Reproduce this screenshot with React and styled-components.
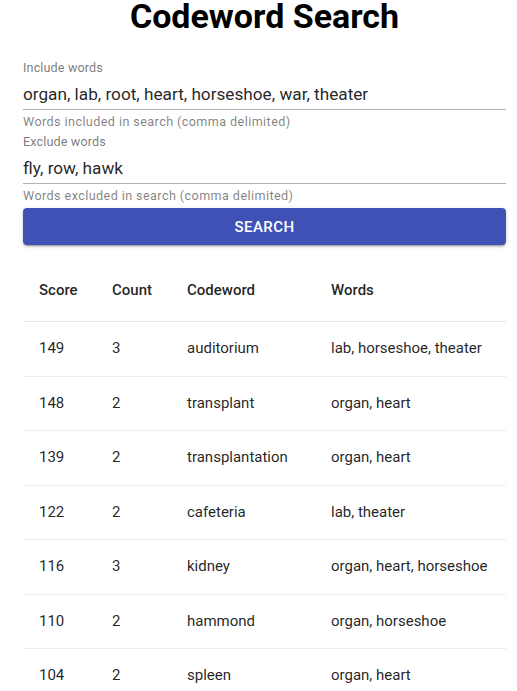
import React from 'react';
import styled, { createGlobalStyle } from 'styled-components';

const GlobalStyle = createGlobalStyle`
body {
  margin: 0;
  background: #fff;
  font-family: Roboto, "Helvetica", Arial, sans-serif;
}
`;

const Page = styled.div`
padding: 0 11px 0 23px;
`;

const Title = styled.h1`
margin: -2px 0 26px;
font-size: 34px;
line-height: 36px;
font-weight: 700;
color: #000;
text-align: center;
`;

const Field = styled.div`
display: flex;
flex-direction: column;
margin-bottom: 4px;
`;

const Label = styled.label`
font-size: 12.6px;
line-height: 16px;
color: rgba(0, 0, 0, 0.54);
letter-spacing: 0.01em;
`;

const Input = styled.input`
border: none;
border-bottom: 1px solid rgba(0, 0, 0, 0.3);
padding: 8px 0 5px;
margin: 0;
font-family: inherit;
font-size: 17.2px;
line-height: 20px;
height: 20px;
box-sizing: content-box;
color: rgba(0, 0, 0, 0.87);
background: transparent;
&:focus { outline: none; }
`;

const Helper = styled.p`
margin: 4px 0 0;
font-size: 12.6px;
line-height: 16px;
color: rgba(0, 0, 0, 0.5);
letter-spacing: 0.033em;
`;

const SearchButton = styled.button`
display: block;
width: 100%;
height: 37px;
border: none;
border-radius: 4px;
background: #3f51b5;
color: #fff;
font-family: inherit;
font-size: 15px;
font-weight: 500;
letter-spacing: 0.028em;
text-transform: uppercase;
box-shadow: 0 3px 1px -2px rgba(0,0,0,0.2), 0 2px 2px 0 rgba(0,0,0,0.14), 0 1px 5px 0 rgba(0,0,0,0.12);
cursor: pointer;
`;

const Table = styled.table`
width: 100%;
margin-top: 18.5px;
border-collapse: collapse;
table-layout: fixed;
font-size: 15px;
color: rgba(0, 0, 0, 0.87);
`;

const Th = styled.th`
box-sizing: border-box;
width: ${(p) => p.w}px;
text-align: left;
font-weight: 500;
padding: 16px 16px 20px;
line-height: 21.5px;
border-bottom: 1px solid #e6e6e6;
`;

const Td = styled.td`
padding: 16px;
line-height: 21.5px;
border-bottom: 1px solid #ececec;
white-space: nowrap;
`;

const columns = [
  { key: 'score', label: 'Score', w: 73 },
  { key: 'count', label: 'Count', w: 75 },
  { key: 'codeword', label: 'Codeword', w: 144 },
  { key: 'words', label: 'Words', w: 191 },
];

const results = [
  { score: 149, count: 3, codeword: 'auditorium', words: 'lab, horseshoe, theater' },
  { score: 148, count: 2, codeword: 'transplant', words: 'organ, heart' },
  { score: 139, count: 2, codeword: 'transplantation', words: 'organ, heart' },
  { score: 122, count: 2, codeword: 'cafeteria', words: 'lab, theater' },
  { score: 116, count: 3, codeword: 'kidney', words: 'organ, heart, horseshoe' },
  { score: 110, count: 2, codeword: 'hammond', words: 'organ, horseshoe' },
  { score: 104, count: 2, codeword: 'spleen', words: 'organ, heart' },
];

function WordField({ label, value, helper }) {
  return (
    <Field>
      <Label>{label}</Label>
      <Input defaultValue={value} />
      <Helper>{helper}</Helper>
    </Field>
  );
}

export default function App() {
  return (
    <Page>
      <GlobalStyle />
      <Title>Codeword Search</Title>
      <WordField
        label="Include words"
        value="organ, lab, root, heart, horseshoe, war, theater"
        helper="Words included in search (comma delimited)"
      />
      <WordField
        label="Exclude words"
        value="fly, row, hawk"
        helper="Words excluded in search (comma delimited)"
      />
      <SearchButton>Search</SearchButton>
      <Table>
        <thead>
          <tr>
            {columns.map((c) => (
              <Th key={c.key} w={c.w}>{c.label}</Th>
            ))}
          </tr>
        </thead>
        <tbody>
          {results.map((r) => (
            <tr key={r.codeword}>
              {columns.map((c) => (
                <Td key={c.key}>{r[c.key]}</Td>
              ))}
            </tr>
          ))}
        </tbody>
      </Table>
    </Page>
  );
}
